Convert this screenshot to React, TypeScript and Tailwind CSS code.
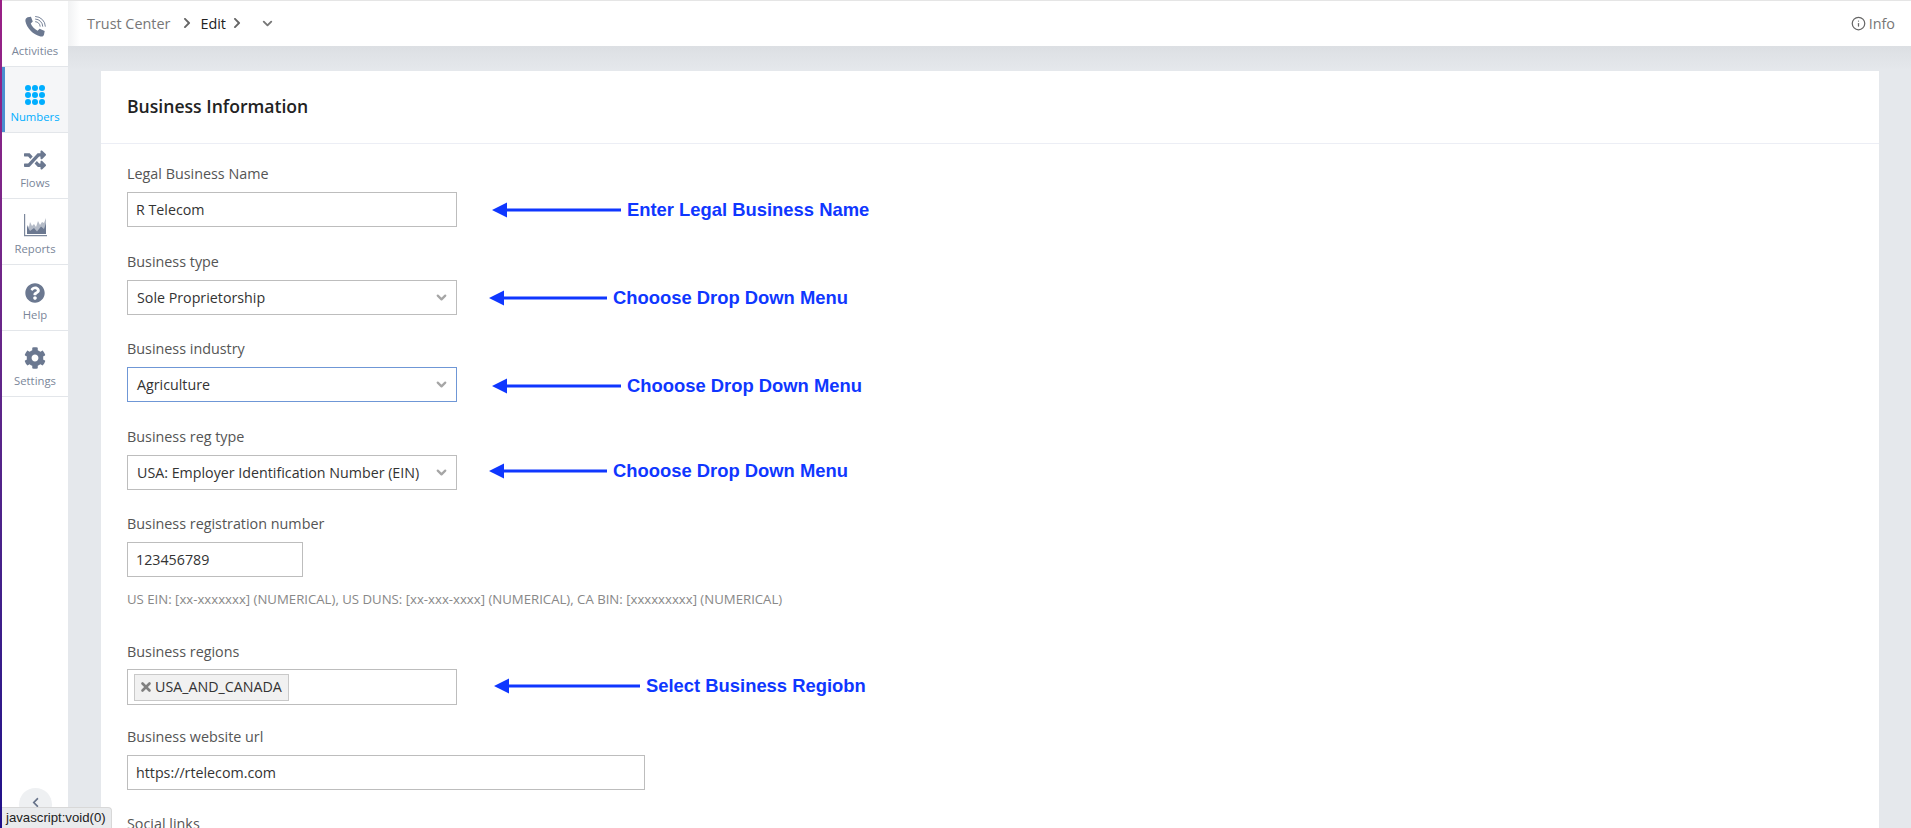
import React from "react";
import { FaRandom, FaQuestionCircle, FaCog, FaChevronRight, FaChevronLeft } from "react-icons/fa";
import { ChevronDown, Info, X } from "lucide-react";

function PhoneIcon() {
  return (
    <svg width="24" height="24" viewBox="0 0 26 26" fill="none">
      <path d="M5 2.5 L8.6 2 L10.6 7 L8.4 9.2 C9.4 12 12.4 15.4 15.8 17 L18 14.8 L23.5 17.2 L22.8 21 C22.2 23 20.6 23.6 19 23.2 C11 21.6 4 14 2.6 6.8 C2.4 4.8 3.2 3.2 5 2.5 Z" fill="#6b7890" />
      <path d="M13.2 7.2 A5.6 5.6 0 0 1 18.6 12.6 M13.2 4.4 A8.4 8.4 0 0 1 21.4 12.6 M13.2 1.6 A11.2 11.2 0 0 1 24.2 12.6" stroke="#6b7890" strokeWidth="1" />
    </svg>
  );
}

function DotsIcon() {
  const dots = [0, 1, 2, 3, 4, 5, 6, 7, 8];
  return (
    <div className="grid grid-cols-3 gap-[1.6px] w-[20px] h-[20px]">
      {dots.map((d) => (
        <div key={d} className="w-[5.6px] h-[5.6px] rounded-full bg-[#00aeff]" />
      ))}
    </div>
  );
}

function ReportsIcon() {
  return (
    <svg width="23" height="23" viewBox="0 0 23 23" fill="none">
      <path d="M0.6 0 V21.7 H23" stroke="#7c889c" strokeWidth="1.2" />
      <path d="M3 19 V11 L5 13 L6 8 L8 12 L10 10 L12 13 L14 7 L16 11 L18 8 L20 9 L22 4 V19 Z" fill="#b4bbc7" />
      <path d="M3 20 V12 L6 17 L10 14 L13 17.5 L17 12.5 L20 15 L22 9 V20 Z" fill="#6b7890" />
    </svg>
  );
}

const navItems = [
  { label: "Activities", icon: <PhoneIcon /> },
  { label: "Numbers", icon: <DotsIcon />, active: true },
  { label: "Flows", icon: <FaRandom size={22} color="#6b7890" /> },
  { label: "Reports", icon: <ReportsIcon /> },
  { label: "Help", icon: <FaQuestionCircle size={20} color="#6b7890" /> },
  { label: "Settings", icon: <FaCog size={22} color="#6b7890" /> },
];

function NavItem({ label, icon, active }: { label: string; icon: React.ReactNode; active?: boolean }) {
  return (
    <div
      className={
        active
          ? "h-[66px] border-b border-[#e3e6ea] shadow-[inset_3px_0_0_#4a8fd0] bg-[#f5f6f8] flex flex-col items-center"
          : "h-[66px] border-b border-[#e3e6ea] flex flex-col items-center"
      }
    >
      <div className="h-[42px] flex items-end justify-center pb-[4px]">{icon}</div>
      <div className={active ? "text-[11.3px] leading-[16px] text-[#00aeff]" : "text-[11.3px] leading-[16px] text-[#7a8699]"}>{label}</div>
    </div>
  );
}

function Annotation({ className, arrow, text }: { className: string; arrow: number; text: string }) {
  return (
    <div className={`flex items-center ${className}`}>
      <svg width={arrow} height="16" viewBox={`0 0 ${arrow} 16`}>
        <path d={`M0 8 L15 0.5 V6.6 H${arrow} V9.4 H15 V15.5 Z`} fill="#0f37ff" />
      </svg>
      <span className="ml-[6px] font-['Liberation_Sans',Arial,sans-serif] font-bold text-[18.4px] leading-[22px] text-[#0f37ff] whitespace-nowrap">{text}</span>
    </div>
  );
}

function Label({ children, tight }: { children: React.ReactNode; tight?: boolean }) {
  return (
    <div className={tight ? "h-[18px] leading-[18px] mb-[8px] text-[14.35px] text-[#555]" : "h-[18px] leading-[18px] mb-[9px] text-[14.35px] text-[#555]"}>
      {children}
    </div>
  );
}

function Select({ value, focused }: { value: string; focused?: boolean }) {
  return (
    <div
      className={
        focused
          ? "w-[330px] h-[35px] border border-[#6f97d6] bg-white flex items-center justify-between pl-[9px] pr-[7px] text-[14.25px] text-[#333]"
          : "w-[330px] h-[35px] border border-[#bdbdbd] bg-white flex items-center justify-between pl-[9px] pr-[7px] text-[14.25px] text-[#333]"
      }
    >
      <span className="whitespace-nowrap">{value}</span>
      <ChevronDown size={15} color="#a6a6a6" strokeWidth={3.6} />
    </div>
  );
}

function TextBox({ value, width }: { value: string; width: string }) {
  return (
    <div className={`${width} h-[35px] border border-[#bdbdbd] bg-white flex items-center pl-[8px] text-[14.25px] text-[#333]`}>{value}</div>
  );
}

export default function App() {
  return (
    <div className="w-[1911px] h-[828px] overflow-hidden flex bg-[#e4e8ec] font-['Open_Sans',sans-serif] relative">
      <div className="w-[2px] h-full shrink-0 bg-gradient-to-b from-[#9a1f86] to-[#1f0f8a]" />
      <aside className="w-[66px] shrink-0 h-full bg-white flex flex-col border-t border-[#e5e5e5] relative">
        {navItems.map((n) => (
          <NavItem key={n.label} label={n.label} icon={n.icon} active={n.active} />
        ))}
        <div className="absolute left-[17px] top-[787px] w-[33px] h-[33px] rounded-full bg-[#eef0f2] flex justify-center pt-[9px]">
          <FaChevronLeft size={11} color="#67738a" />
        </div>
      </aside>
      <div className="flex-1 min-w-0 flex flex-col">
        <header className="h-[46px] shrink-0 border-t border-[#e5e5e5] bg-[linear-gradient(90deg,#f1f2f3,#ffffff_12px)] flex items-center justify-between pl-[19px] pr-[16px] text-[14.4px]">
          <div className="flex items-center">
            <span className="text-[#777]">Trust Center</span>
            <FaChevronRight size={12} color="#666" className="ml-[11px]" />
            <span className="text-[#222] ml-[7px]">Edit</span>
            <FaChevronRight size={12} color="#666" className="ml-[5px]" />
            <ChevronDown size={15} color="#777" strokeWidth={3} className="ml-[17px]" />
          </div>
          <div className="flex items-center text-[#777] gap-[3px]">
            <Info size={15} color="#666" />
            <span>Info</span>
          </div>
        </header>
        <main className="flex-1 min-h-0 pl-[33px] pr-[32px] pt-[25px] bg-[linear-gradient(180deg,#dcdfe3,#e5e8ec_24px)]">
          <section className="bg-white">
            <div className="h-[73px] border-b border-[#eceef5] flex items-center pl-[26px] pb-[1px] text-[17.6px] font-semibold text-[#222]">Business Information</div>
            <div className="pl-[26px] pt-[21px] pb-[40px]">
              <Label>Legal Business Name</Label>
              <div className="flex items-center h-[35px]">
                <TextBox value="R Telecom" width="w-[330px]" />
                <Annotation className="ml-[35px]" arrow={129} text="Enter Legal Business Name" />
              </div>
              <div className="h-[26px]" />
              <Label>Business type</Label>
              <div className="flex items-center h-[35px]">
                <Select value="Sole Proprietorship" />
                <Annotation className="ml-[32px]" arrow={118} text="Chooose Drop Down Menu" />
              </div>
              <div className="h-[25px]" />
              <Label>Business industry</Label>
              <div className="flex items-center h-[35px]">
                <Select value="Agriculture" focused />
                <Annotation className="ml-[35px] translate-y-[1px]" arrow={129} text="Chooose Drop Down Menu" />
              </div>
              <div className="h-[26px]" />
              <Label>Business reg type</Label>
              <div className="flex items-center h-[35px]">
                <Select value="USA: Employer Identification Number (EIN)" />
                <Annotation className="ml-[32px] -translate-y-[2px]" arrow={118} text="Chooose Drop Down Menu" />
              </div>
              <div className="h-[25px]" />
              <Label>Business registration number</Label>
              <TextBox value="123456789" width="w-[176px]" />
              <div className="mt-[13px] h-[18px] leading-[18px] text-[13.2px] text-[#888] whitespace-nowrap">US EIN: [xx-xxxxxxx] (NUMERICAL), US DUNS: [xx-xxx-xxxx] (NUMERICAL), CA BIN: [xxxxxxxxx] (NUMERICAL)</div>
              <div className="h-[35px]" />
              <Label tight>Business regions</Label>
              <div className="flex items-center h-[36px]">
                <div className="w-[330px] h-[36px] border border-[#bdbdbd] bg-white flex items-center pl-[6px]">
                  <div className="h-[27px] border border-[#c9c9c9] bg-[#f1f1f1] flex items-center pl-[4px] pr-[6px] text-[14.25px] text-[#333]">
                    <X size={14} color="#808080" strokeWidth={4.5} className="mr-[2px]" />
                    <span>USA_AND_CANADA</span>
                  </div>
                </div>
                <Annotation className="ml-[37px] -translate-y-[1px]" arrow={146} text="Select Business Regiobn" />
              </div>
              <div className="h-[23px]" />
              <Label>Business website url</Label>
              <TextBox value="https://rtelecom.com" width="w-[518px]" />
              <div className="h-[25px]" />
              <Label>Social links</Label>
            </div>
          </section>
        </main>
      </div>
      <div className="absolute left-[2px] bottom-0 h-[21px] w-[110px] bg-[#e9ebed] border-t border-r border-[#d8d8d8] rounded-tr-[4px] flex items-center pl-[4px] text-[13.2px] text-[#222] font-['Liberation_Sans',sans-serif] whitespace-nowrap">javascript:void(0)</div>
    </div>
  );
}
